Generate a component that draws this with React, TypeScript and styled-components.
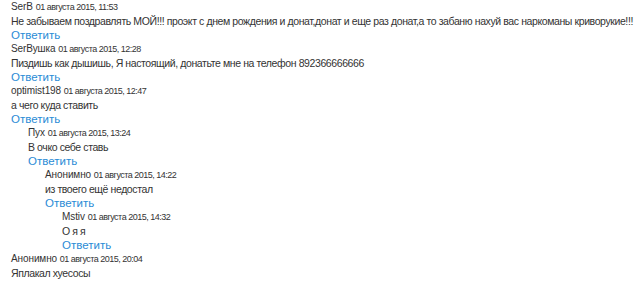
import React from "react";
import styled, { createGlobalStyle } from "styled-components";

const Global = createGlobalStyle`
  html, body { margin: 0; padding: 0; background: #fff; }
  body { font-family: "Liberation Sans", Arial, sans-serif; color: #333; }
`;

const List = styled.div`
  padding: 0 0 0 11px;
`;

const Comment = styled.div<{ $level: number }>`
  padding-left: ${(p) => p.$level * 17}px;
`;

const Header = styled.div`
  height: 14px;
  line-height: 14px;
  font-size: 10px;
  color: #333;
  white-space: nowrap;
`;

const Name = styled.span`
  font-size: 10px;
  letter-spacing: -0.1px;
`;

const DateText = styled.span`
  font-size: 9px;
  letter-spacing: -0.5px;
`;

const Body = styled.div`
  height: 14px;
  line-height: 14px;
  font-size: 10.5px;
  letter-spacing: -0.4px;
  color: #333;
  white-space: nowrap;
`;

const Reply = styled.a`
  display: block;
  height: 14px;
  line-height: 14px;
  font-size: 11.5px;
  color: #2a8bd6;
  text-decoration: none;
`;

type C = { level: number; name: string; date: string; text: string; reply: boolean };

const data: C[] = [
  { level: 0, name: "SerB", date: "01 августа 2015, 11:53", text: "Не забываем поздравлять МОЙ!!! проэкт с днем рождения и донат,донат и еще раз донат,а то забаню нахуй вас наркоманы криворукие!!!", reply: true },
  { level: 0, name: "SerВушка", date: "01 августа 2015, 12:28", text: "Пиздишь как дышишь, Я настоящий, донатьте мне на телефон 892366666666", reply: true },
  { level: 0, name: "optimist198", date: "01 августа 2015, 12:47", text: "а чего куда ставить", reply: true },
  { level: 1, name: "Пух", date: "01 августа 2015, 13:24", text: "В очко себе ставь", reply: true },
  { level: 2, name: "Анонимно", date: "01 августа 2015, 14:22", text: "из твоего ещё недостал", reply: true },
  { level: 3, name: "Mstiv", date: "01 августа 2015, 14:32", text: "О я я", reply: true },
  { level: 0, name: "Анонимно", date: "01 августа 2015, 20:04", text: "Яплакал хуесосы", reply: false },
];

export default function App() {
  return (
    <>
      <Global />
      <List>
        {data.map((c, i) => (
          <Comment key={i} $level={c.level}>
            <Header>
              <Name>{c.name}</Name> <DateText>{c.date}</DateText>
            </Header>
            <Body>{c.text}</Body>
            {c.reply && <Reply href="#">Ответить</Reply>}
          </Comment>
        ))}
      </List>
    </>
  );
}
